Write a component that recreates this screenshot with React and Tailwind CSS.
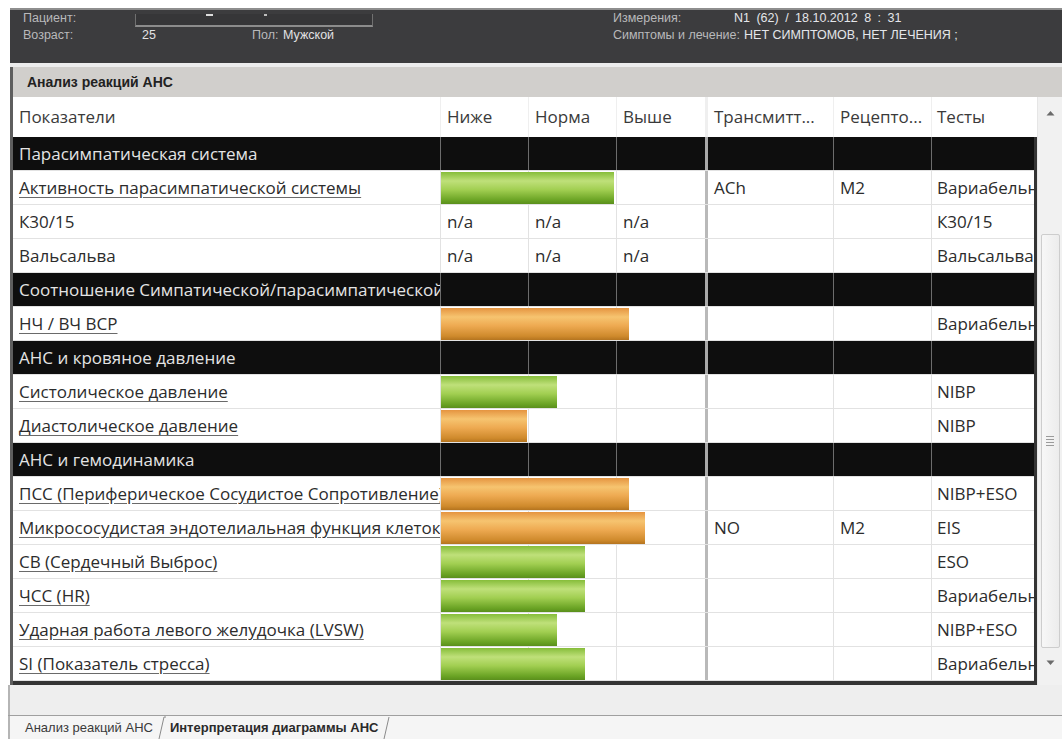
const GREEN =
  'bg-[linear-gradient(to_bottom,#86bd3a_0%,#bfe07a_28%,#a2cf52_55%,#6aa324_88%,#5a8f1c_100%)]';
const ORANGE =
  'bg-[linear-gradient(to_bottom,#e59440_0%,#f6c470_28%,#eeaa52_55%,#cf8a2c_88%,#b4741f_100%)]';

// g / o — цвет полосы, w — длина в пикселях от начала колонки «Ниже»
const rows = [
  { section: 'Парасимпатическая система' },
  { name: 'Активность парасимпатической системы', link: true, bar: { c: 'g', w: 173 }, tr: 'ACh', rec: 'M2', test: 'Вариабельность' },
  { name: 'К30/15', na: true, test: 'К30/15' },
  { name: 'Вальсальва', na: true, test: 'Вальсальва' },
  { section: 'Соотношение Симпатической/парасимпатической системы' },
  { name: 'НЧ / ВЧ ВСР', link: true, bar: { c: 'o', w: 188 }, test: 'Вариабельность' },
  { section: 'АНС и кровяное давление' },
  { name: 'Систолическое давление', link: true, bar: { c: 'g', w: 116 }, test: 'NIBP' },
  { name: 'Диастолическое давление', link: true, bar: { c: 'o', w: 86 }, test: 'NIBP' },
  { section: 'АНС и гемодинамика' },
  { name: 'ПСС (Периферическое Сосудистое Сопротивление)', link: true, bar: { c: 'o', w: 188 }, test: 'NIBP+ESO' },
  { name: 'Микрососудистая эндотелиальная функция клеток', link: true, bar: { c: 'o', w: 204 }, tr: 'NO', rec: 'M2', test: 'EIS' },
  { name: 'СВ (Сердечный Выброс)', link: true, bar: { c: 'g', w: 144 }, test: 'ESO' },
  { name: 'ЧСС (HR)', link: true, bar: { c: 'g', w: 144 }, test: 'Вариабельность' },
  { name: 'Ударная работа левого желудочка (LVSW)', link: true, bar: { c: 'g', w: 116 }, test: 'NIBP+ESO' },
  { name: 'SI (Показатель стресса)', link: true, bar: { c: 'g', w: 144 }, test: 'Вариабельность' },
];

const Cell = ({ w, className = '', children }) => (
  <div className={`${w} shrink-0 flex items-center px-[6px] overflow-hidden whitespace-nowrap ${className}`}>
    {children}
  </div>
);

function SectionRow({ title }) {
  const line = 'border-r border-[#6c6c6c] h-full';
  return (
    <div className="flex h-[34px] bg-[#0e0e0e] text-[#e4e4e4] border-b border-[#e2e2e2]">
      <Cell w="w-[428px]" className={`${line} px-[5px]`}>{title}</Cell>
      <Cell w="w-[88px]" className={line} />
      <Cell w="w-[88px]" className={line} />
      <Cell w="w-[88px]" className="h-full" />
      <div className="w-[3px] shrink-0 bg-[#a9a9a9]" />
      <Cell w="w-[126px]" className={line} />
      <Cell w="w-[98px]" className={line} />
      <Cell w="w-[102px]" />
    </div>
  );
}

function DataRow({ row }) {
  const line = 'border-r border-[#e2e2e2] h-full';
  return (
    <div className="flex h-[34px] bg-white text-[#2c2c2c] border-b border-[#e2e2e2]">
      <Cell w="w-[428px]" className={`${line} px-[5px]`}>
        <span className={row.link ? 'underline decoration-[#6a6a6a] underline-offset-[3px]' : ''}>
          {row.name}
        </span>
      </Cell>
      <div className="relative w-[264px] shrink-0 flex">
        <Cell w="w-[88px]" className={line}>{row.na && 'n/a'}</Cell>
        <Cell w="w-[88px]" className={line}>{row.na && 'n/a'}</Cell>
        <Cell w="w-[88px]" className="h-full">{row.na && 'n/a'}</Cell>
        {row.bar && (
          <div
            className={`absolute left-0 top-[1px] bottom-0 ${row.bar.c === 'g' ? GREEN : ORANGE}`}
            style={{ width: row.bar.w }}
          />
        )}
      </div>
      <div className="w-[3px] shrink-0 bg-[#b9b9b9]" />
      <Cell w="w-[126px]" className={line}>{row.tr}</Cell>
      <Cell w="w-[98px]" className={line}>{row.rec}</Cell>
      <Cell w="w-[102px]" className="pl-[5px] pr-0">{row.test}</Cell>
    </div>
  );
}

function Scrollbar() {
  return (
    <div className="w-[25px] shrink-0 flex flex-col items-center bg-[#f1f1f1] border-l border-[#e6e6e6]">
      <svg width="9" height="6" viewBox="0 0 9 6" className="mt-[13px]">
        <path d="M0.5 5.5 L4.5 1 L8.5 5.5 Z" fill="#6b6b6b" />
      </svg>
      <div className="mt-[118px] w-[19px] h-[414px] rounded-[2px] border border-[#cdcdcd] bg-[linear-gradient(to_right,#f7f7f7,#ececec)] flex flex-col items-center justify-center gap-[2px]">
        <div className="w-[8px] h-px bg-[#9a9a9a]" />
        <div className="w-[8px] h-px bg-[#9a9a9a]" />
        <div className="w-[8px] h-px bg-[#9a9a9a]" />
        <div className="w-[8px] h-px bg-[#9a9a9a]" />
      </div>
      <svg width="9" height="6" viewBox="0 0 9 6" className="mt-[12px]">
        <path d="M0.5 0.5 L4.5 5 L8.5 0.5 Z" fill="#6b6b6b" />
      </svg>
    </div>
  );
}

export default function App() {
  return (
    <div className="w-[1062px] h-[739px] overflow-hidden bg-white font-['Open_Sans','Noto_Sans',sans-serif] text-[17px]">
      <div className="h-[8px]" />

      {/* шапка с данными пациента */}
      <div className="ml-[10px] h-[55px] bg-[#3c3c3e] border-t-2 border-[#8e8e8e] flex pt-[1px] pl-[13px] font-['Liberation_Sans',Arial,sans-serif] text-[12.5px] leading-[15px] text-[#b9b9bb]">
        <div className="w-[590px] shrink-0 flex flex-col">
          <div className="flex items-start h-[15px]">
            <span className="w-[112px]">Пациент:</span>
            <span className="relative shrink-0 w-[238px] h-[13px] mt-[3px] bg-[#363638] border-x border-[#707070] border-b-2 border-b-[#8c8c8c]">
              <span className="absolute left-[70px] top-0 w-[7px] h-[2px] bg-[#dcdcdc]" />
              <span className="absolute left-[128px] top-0 w-[3px] h-[2px] bg-[#bdbdbd]" />
            </span>
          </div>
          <div className="flex h-[15px] mt-[2px]">
            <span className="w-[119px]">Возраст:</span>
            <span className="w-[110px] text-[#e2e2e4]">25</span>
            <span className="w-[31px]">Пол:</span>
            <span className="text-[#e2e2e4]">Мужской</span>
          </div>
        </div>
        <div className="flex flex-col">
          <div className="flex h-[15px]">
            <span className="w-[121px]">Измерения:</span>
            <span className="text-[#e4e6ea] [word-spacing:3px]">N1 (62) / 18.10.2012  8 : 31</span>
          </div>
          <div className="flex h-[15px] mt-[2px]">
            <span className="mr-[4px]">Симптомы и лечение:</span>
            <span className="text-[#e4e6ea]">НЕТ СИМПТОМОВ, НЕТ ЛЕЧЕНИЯ ;</span>
          </div>
        </div>
      </div>

      <div className="ml-[10px] h-[4px] bg-[#ececec]" />

      <div className="ml-[10px] border-l-[3px] border-[#5e5e5e]">
        <div className="h-[30px] bg-[#d1cfcc] flex items-center pl-[14px] font-['Liberation_Sans',Arial,sans-serif] font-bold text-[14px] text-[#222]">
          Анализ реакций АНС
        </div>

        <div className="flex">
          <div className="w-[1024px] shrink-0">
            <div className="flex h-[40px] text-[#3a3a3a] bg-white">
              <Cell w="w-[428px]" className="px-[5px] border-r border-[#efefef] h-full">Показатели</Cell>
              <Cell w="w-[88px]" className="border-r border-[#efefef] h-full">Ниже</Cell>
              <Cell w="w-[88px]" className="border-r border-[#efefef] h-full">Норма</Cell>
              <Cell w="w-[88px]" className="h-full">Выше</Cell>
              <div className="w-[3px] shrink-0 bg-[#efefef]" />
              <Cell w="w-[126px]" className="border-r border-[#efefef] h-full">Трансмитт...</Cell>
              <Cell w="w-[98px]" className="border-r border-[#efefef] h-full">Рецепто...</Cell>
              <Cell w="w-[102px]" className="pl-[5px]">Тесты</Cell>
            </div>
            <div className="border-r-[3px] border-b-4 border-[#343434]">
              {rows.map((r, i) =>
                r.section ? <SectionRow key={i} title={r.section} /> : <DataRow key={i} row={r} />
              )}
            </div>
          </div>
          <Scrollbar />
        </div>
      </div>

      {/* нижняя панель с вкладками */}
      <div className="ml-[8px] h-[30px] bg-[#eeeeee] border-l-2 border-[#b5b5b5]" />
      <div className="ml-[8px] h-px bg-[#9f9f9f]" />
      <div className="ml-[8px] h-[23px] bg-[#f5f5f5] border-l-2 border-[#b5b5b5] flex items-center font-['Liberation_Sans',Arial,sans-serif] text-[13px] text-[#3a3a3a]">
        <span className="pl-[15px] pr-[5px]">Анализ реакций АНС</span>
        <svg width="8" height="23" viewBox="0 0 8 23" className="shrink-0">
          <path d="M1 23 L6 1 L8 1" stroke="#8a8a8a" fill="none" />
        </svg>
        <span className="pl-[4px] pr-[5px] font-bold text-[#2a2a2a]">Интерпретация диаграммы АНС</span>
        <svg width="8" height="23" viewBox="0 0 8 23" className="shrink-0">
          <path d="M1 23 L6 1" stroke="#8a8a8a" fill="none" />
        </svg>
      </div>
    </div>
  );
}
